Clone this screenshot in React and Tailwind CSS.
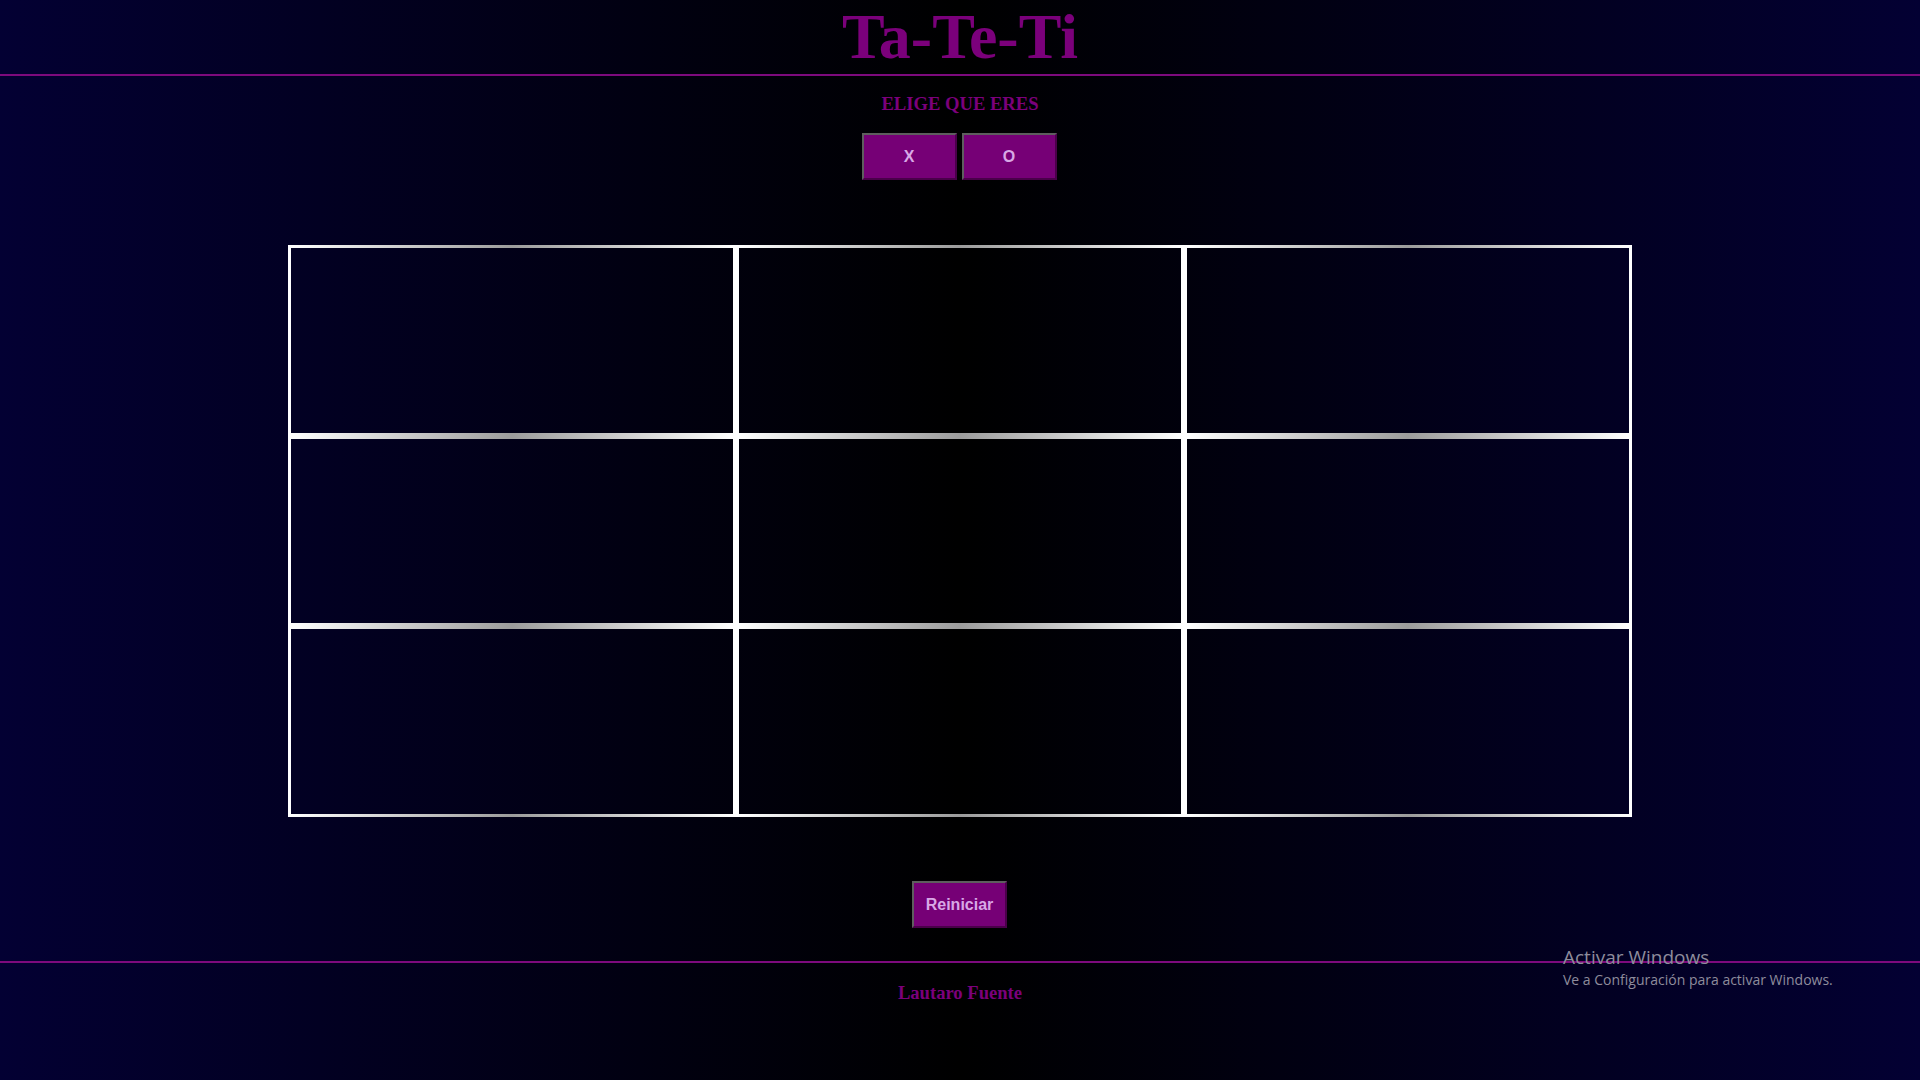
import React from "react";

export default function App() {
  const cells = Array.from({ length: 9 });
  return (
    <div className="relative min-h-[1080px] w-full bg-[linear-gradient(to_right,#030033,#000000_50%,#030033)] font-['Liberation_Serif',serif]">
      <header className="border-b-2 border-[#7d0a7d]">
        <h1 className="m-0 text-center text-[64px] font-bold leading-[74px] text-[#7b007b]">Ta-Te-Ti</h1>
      </header>

      <div className="mt-[17px] text-center text-[18.6px] font-bold leading-[21px] text-[#7b007b]">ELIGE QUE ERES</div>

      <div className="mt-[19px] flex justify-center gap-[5px] pr-[2px]">
        <button className="h-[47px] w-[95px] border-2 border-t-[#5e5e5e] border-l-[#5e5e5e] border-r-[#4a004a] border-b-[#4a004a] bg-[#760076] font-['Liberation_Sans',sans-serif] text-[16px] font-bold text-[#d8a8e6]">X</button>
        <button className="h-[47px] w-[95px] border-2 border-t-[#5e5e5e] border-l-[#5e5e5e] border-r-[#4a004a] border-b-[#4a004a] bg-[#760076] font-['Liberation_Sans',sans-serif] text-[16px] font-bold text-[#d8a8e6]">O</button>
      </div>

      <div className="mx-auto mt-[65px] grid h-[572px] w-[1344px] grid-cols-3 grid-rows-3">
        {cells.map((_, i) => (
          <div
            key={i}
            className="border-[3px] border-solid border-white [border-image:linear-gradient(to_right,#ffffff,#9c9c9c,#ffffff)_1]"
          />
        ))}
      </div>

      <div className="mt-[64px] flex justify-center pr-[1px]">
        <button className="h-[47px] w-[95px] border-2 border-t-[#5e5e5e] border-l-[#5e5e5e] border-r-[#4a004a] border-b-[#4a004a] bg-[#760076] font-['Liberation_Sans',sans-serif] text-[16px] font-bold text-[#d8a8e6]">Reiniciar</button>
      </div>

      <footer className="mt-[33px] border-t-2 border-[#7d0a7d] pt-[19px] text-center text-[18.6px] font-bold leading-[21px] text-[#7b007b]">
        Lautaro Fuente
      </footer>

      <div className="pointer-events-none absolute left-[1563px] top-[944px] font-['Open_Sans',sans-serif] text-[#8e8c9c]">
        <div className="text-[19px] leading-[26px]">Activar Windows</div>
        <div className="text-[14px] leading-[20px]">Ve a Configuración para activar Windows.</div>
      </div>
    </div>
  );
}
